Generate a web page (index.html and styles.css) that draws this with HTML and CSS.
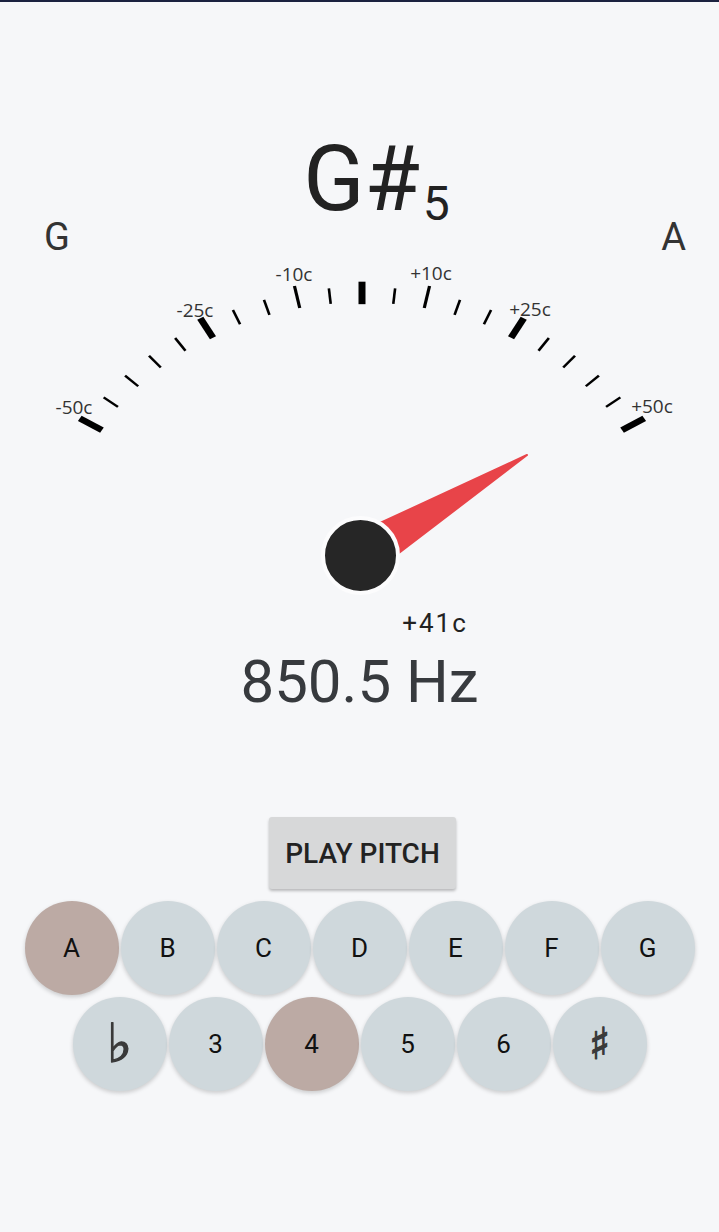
FILE: index.html
```html
<!DOCTYPE html>
<html>
<head>
  <title>Tuner</title>
  <meta name="viewport" content="width=device-width, initial-scale=1.0">
  <link rel="stylesheet" href="styles.css">
</head>
<body>

  <div class="tuner-head">
    <h1 class="note">G#<span class="octave">5</span></h1>
    <div class="neighbours">
      <span>G</span>
      <span>A</span>
    </div>
  </div>

  <svg class="gauge" viewBox="0 252 719 400" width="719" height="400">
    <!-- scale is drawn on a circle, then squashed a little -->
    <g transform="translate(362 568) scale(1 0.865)">
      <line class="tick major" y1="-305" y2="-331" transform="rotate(-58.5)"/>
      <line class="tick minor" y1="-307" y2="-325" transform="rotate(-52.65)"/>
      <line class="tick minor" y1="-307" y2="-325" transform="rotate(-46.8)"/>
      <line class="tick minor" y1="-307" y2="-325" transform="rotate(-40.95)"/>
      <line class="tick minor" y1="-307" y2="-325" transform="rotate(-35.1)"/>
      <line class="tick major" y1="-305" y2="-331" transform="rotate(-29.25)"/>
      <line class="tick minor" y1="-307" y2="-325" transform="rotate(-23.4)"/>
      <line class="tick minor" y1="-307" y2="-325" transform="rotate(-17.55)"/>
      <line class="tick mid" y1="-307" y2="-333" transform="rotate(-11.7)"/>
      <line class="tick minor" y1="-307" y2="-325" transform="rotate(-5.85)"/>
      <line class="tick major" y1="-305" y2="-331"/>
      <line class="tick minor" y1="-307" y2="-325" transform="rotate(5.85)"/>
      <line class="tick mid" y1="-307" y2="-333" transform="rotate(11.7)"/>
      <line class="tick minor" y1="-307" y2="-325" transform="rotate(17.55)"/>
      <line class="tick minor" y1="-307" y2="-325" transform="rotate(23.4)"/>
      <line class="tick major" y1="-305" y2="-331" transform="rotate(29.25)"/>
      <line class="tick minor" y1="-307" y2="-325" transform="rotate(35.1)"/>
      <line class="tick minor" y1="-307" y2="-325" transform="rotate(40.95)"/>
      <line class="tick minor" y1="-307" y2="-325" transform="rotate(46.8)"/>
      <line class="tick minor" y1="-307" y2="-325" transform="rotate(52.65)"/>
      <line class="tick major" y1="-305" y2="-331" transform="rotate(58.5)"/>
    </g>

    <text class="tick-label" x="74" y="414">-50c</text>
    <text class="tick-label" x="195" y="317">-25c</text>
    <text class="tick-label" x="294" y="281">-10c</text>
    <text class="tick-label" x="431" y="280">+10c</text>
    <text class="tick-label" x="530" y="316">+25c</text>
    <text class="tick-label" x="652" y="413">+50c</text>

    <polygon class="needle" points="527,455 395.6,555.5 376.9,524.5"/>
    <circle class="hub" cx="360.5" cy="555.5" r="37.5"/>

    <text class="cents" x="435" y="632">+41c</text>
  </svg>

  <div class="freq">850.5 Hz</div>

  <div class="controls">
    <button class="play">PLAY PITCH</button>

    <div class="keyboard">
      <div class="keys">
        <button class="key active">A</button>
        <button class="key">B</button>
        <button class="key">C</button>
        <button class="key">D</button>
        <button class="key">E</button>
        <button class="key">F</button>
        <button class="key">G</button>
      </div>
      <div class="keys">
        <button class="key flat">&#9837;</button>
        <button class="key">3</button>
        <button class="key active">4</button>
        <button class="key">5</button>
        <button class="key">6</button>
        <button class="key sharp">&#9839;</button>
      </div>
    </div>
  </div>

</body>
</html>
```

FILE: styles.css
```css
html {
  background-color: #f6f7f9;
}

body {
  margin: 0;
  padding-bottom: 60px;
  border-top: 2px solid #1b2240;
  background-color: #f6f7f9;
  font-family: Roboto, "Liberation Sans", sans-serif;
  color: #222;
}

.tuner-head {
  padding-top: 138px;
}

.note {
  margin: 0;
  padding-left: 4px;
  font-size: 90px;
  font-weight: 400;
  line-height: 80px;
  text-align: center;
  color: #222;
}

.octave {
  font-size: 48px;
  line-height: 0;
  vertical-align: -10px;
  margin-left: 3px;
  margin-right: -30px;
}

.neighbours {
  display: flex;
  justify-content: space-between;
  margin-top: 2px;
  padding: 0 33px 0 44px;
  font-size: 38px;
  line-height: 30px;
  color: #333;
}

.gauge {
  display: block;
}

.tick {
  stroke: #000;
}

.tick.minor {
  stroke-width: 2.6;
}

.tick.mid {
  stroke-width: 3.2;
}

.tick.major {
  stroke-width: 7;
}

.tick-label {
  font-family: "Open Sans", sans-serif;
  font-size: 19px;
  fill: #333;
  text-anchor: middle;
}

.needle {
  fill: #e84449;
  stroke: #e84449;
  stroke-width: 2;
  stroke-linejoin: round;
}

.hub {
  fill: #262626;
  stroke: #fcfcfd;
  stroke-width: 4;
}

.cents {
  font-family: Roboto, sans-serif;
  font-size: 26px;
  letter-spacing: 2px;
  fill: #222;
  text-anchor: middle;
}

.freq {
  font-size: 60px;
  line-height: 60px;
  text-align: center;
  color: #373a3e;
}

.controls {
  display: flex;
  flex-direction: column;
  align-items: center;
  margin-top: 105px;
}

.play {
  width: 187px;
  height: 72px;
  margin-left: 6px;
  padding: 0;
  border: none;
  border-radius: 3px;
  background-color: #d7d8d9;
  box-shadow: 0 2px 3px rgba(0, 0, 0, 0.25);
  font-family: Roboto, sans-serif;
  font-size: 28px;
  font-weight: 500;
  color: #222;
}

.keyboard {
  margin-top: 11px;
}

.keys {
  display: flex;
  justify-content: center;
}

.key {
  width: 94px;
  height: 94px;
  margin: 1px;
  padding: 0;
  border: none;
  border-radius: 50%;
  background-color: #cfd8dc;
  box-shadow: 0 2px 4px rgba(0, 0, 0, 0.18);
  font-family: Roboto, sans-serif;
  font-size: 26px;
  color: #111;
}

.key.active {
  background-color: #bcaaa4;
}

.key.flat,
.key.sharp {
  font-family: "DejaVu Sans", sans-serif;
  line-height: 1;
  color: #3a3a3a;
  -webkit-text-stroke: 1.2px #3a3a3a;
}

.key.flat {
  font-size: 54px;
}

.key.sharp {
  font-size: 44px;
}
```
